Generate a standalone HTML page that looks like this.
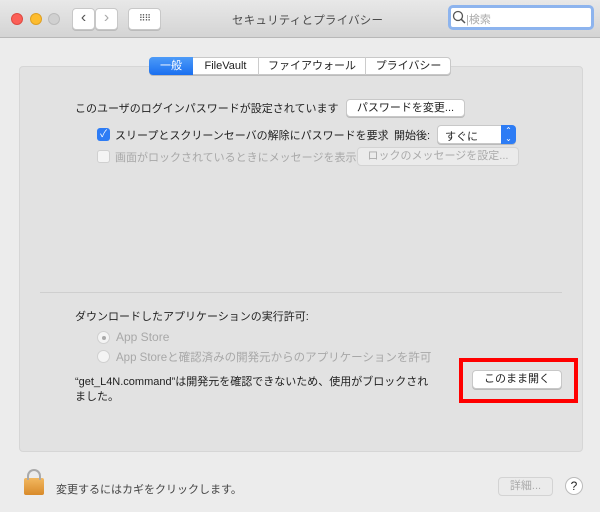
<!DOCTYPE html>
<html><head><meta charset="utf-8"><style>
*{margin:0;padding:0;box-sizing:border-box}
body{width:600px;height:512px;overflow:hidden;background:#ececec;font-family:"Liberation Sans","Noto Sans CJK JP",sans-serif;font-size:11px;color:#222;position:relative}
.a{position:absolute;white-space:nowrap}
.tb{left:0;top:0;width:600px;height:38px;background:linear-gradient(#e8e8e8,#d4d4d4);border-bottom:1px solid #b8b8b8}
.dot{width:12px;height:12px;border-radius:50%;top:13px}
.btn{background:#fff;border:1px solid #c8c8c8;border-radius:4px;box-shadow:0 1px 0 #bbb;text-align:center;line-height:16px}
.panel{left:19px;top:66px;width:564px;height:386px;background:#e2e2e2;border:1px solid #d6d6d6;border-radius:4px}
.gray{color:#a8a8a8}
</style></head><body>
<div class="a tb"></div>
<div class="a dot" style="left:11px;background:#fc5f57;border:1px solid #de4a42"></div>
<div class="a dot" style="left:30px;background:#fdbc2e;border:1px solid #dea023"></div>
<div class="a dot" style="left:48px;background:#d0d0d0;border:1px solid #bbb"></div>
<div class="a btn" style="left:72px;top:8px;width:23px;height:22px;font-size:16px;line-height:18px;color:#555">&#8249;</div>
<div class="a btn" style="left:95px;top:8px;width:23px;height:22px;font-size:16px;line-height:18px;color:#aaa">&#8250;</div>
<div class="a btn" style="left:128px;top:8px;width:33px;height:22px;font-size:9px;line-height:19px;color:#555;letter-spacing:-1px">⠿⠿</div>
<div class="a" style="left:232px;top:12px;font-size:11.5px;color:#4a4a4a;letter-spacing:0.2px">セキュリティとプライバシー</div>
<div class="a" style="left:448px;top:5px;width:146px;height:25px;background:#fff;border:3px solid #8db4ee;border-radius:5px"></div>
<svg class="a" style="left:452px;top:10px" width="14" height="14"><circle cx="6" cy="6" r="4.5" fill="none" stroke="#555" stroke-width="1.3"/><line x1="9.3" y1="9.3" x2="13" y2="13" stroke="#555" stroke-width="1.5"/></svg>
<div class="a" style="left:466px;top:11px;font-size:11px;color:#aaa">|検索</div>
<div class="a panel"></div>
<div class="a" style="left:149px;top:57px;width:302px;height:18px;background:#fff;border:1px solid #c8c8c8;border-radius:4px;box-shadow:0 1px 0 #bbb"></div>
<div class="a" style="left:149px;top:57px;width:44px;height:18px;background:linear-gradient(#4d9bf8,#1a6ff0);border-radius:4px 0 0 4px;color:#fff;text-align:center;line-height:18px">一般</div>
<div class="a" style="left:193px;top:57px;width:66px;height:18px;border-right:1px solid #ccc;text-align:center;line-height:18px">FileVault</div>
<div class="a" style="left:259px;top:57px;width:107px;height:18px;border-right:1px solid #ccc;text-align:center;line-height:18px">ファイアウォール</div>
<div class="a" style="left:366px;top:57px;width:85px;height:18px;text-align:center;line-height:18px">プライバシー</div>
<div class="a" style="left:75px;top:100px">このユーザのログインパスワードが設定されています</div>
<div class="a btn" style="left:346px;top:99px;width:119px;height:18px">パスワードを変更...</div>
<div class="a" style="left:97px;top:128px;width:13px;height:13px;background:#2d7cf5;border-radius:3px;color:#fff;font-size:10px;line-height:13px;text-align:center">✓</div>
<div class="a" style="left:115px;top:127px">スリープとスクリーンセーバの解除にパスワードを要求</div>
<div class="a" style="left:394px;top:127px">開始後:</div>
<div class="a btn" style="left:437px;top:125px;width:79px;height:19px"></div>
<div class="a" style="left:445px;top:128px">すぐに</div>
<div class="a" style="left:501px;top:125px;width:15px;height:19px;background:#2d7cf5;border-radius:0 4px 4px 0;color:#fff;font-size:8px;line-height:8px;text-align:center;padding-top:2px">⌃<br>⌄</div>
<div class="a" style="left:97px;top:150px;width:13px;height:13px;background:#f4f4f4;border:1px solid #d0d0d0;border-radius:3px"></div>
<div class="a gray" style="left:115px;top:149px">画面がロックされているときにメッセージを表示</div>
<div class="a" style="left:357px;top:147px;width:162px;height:19px;border:1px solid #d3d3d3;border-radius:4px;background:#ebebeb;color:#aaa;text-align:center;line-height:17px">ロックのメッセージを設定...</div>
<div class="a" style="left:40px;top:292px;width:522px;height:1px;background:#cfcfcf"></div>
<div class="a" style="left:75px;top:308px">ダウンロードしたアプリケーションの実行許可:</div>
<div class="a" style="left:97px;top:331px;width:13px;height:13px;border-radius:50%;background:#f4f4f4;border:1px solid #d0d0d0"></div>
<div class="a" style="left:101.5px;top:335.5px;width:4px;height:4px;border-radius:50%;background:#aaa"></div>
<div class="a gray" style="left:116px;top:330px;font-size:12px">App Store</div>
<div class="a" style="left:97px;top:350px;width:13px;height:13px;border-radius:50%;background:#f4f4f4;border:1px solid #d0d0d0"></div>
<div class="a gray" style="left:116px;top:349px;font-size:11.5px">App Storeと確認済みの開発元からのアプリケーションを許可</div>
<div class="a" style="left:75px;top:373px">“get_L4N.command”は開発元を確認できないため、使用がブロックされ</div>
<div class="a" style="left:75px;top:388px">ました。</div>
<div class="a" style="left:459px;top:358px;width:119px;height:45px;border:4px solid #f00"></div>
<div class="a btn" style="left:472px;top:370px;width:90px;height:19px">このまま開く</div>
<div class="a" style="left:24px;top:478px;width:20px;height:17px;background:linear-gradient(#f2b860,#d88a2a);border-radius:2px"></div>
<div class="a" style="left:27px;top:469px;width:14px;height:11px;border:2px solid #aaa;border-bottom:none;border-radius:7px 7px 0 0"></div>
<div class="a" style="left:56px;top:481px;color:#444">変更するにはカギをクリックします。</div>
<div class="a" style="left:498px;top:477px;width:55px;height:19px;border:1px solid #d3d3d3;border-radius:4px;background:#ebebeb;color:#aaa;text-align:center;line-height:17px">詳細...</div>
<div class="a" style="left:565px;top:477px;width:18px;height:18px;border-radius:50%;background:#fff;border:1px solid #bbb;text-align:center;line-height:16px;font-size:12px">?</div>
</body></html>
